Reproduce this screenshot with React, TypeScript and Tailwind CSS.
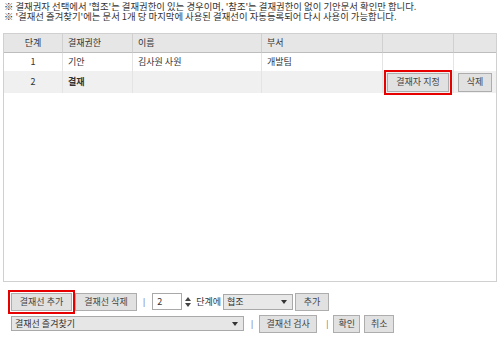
import React from "react";

const font = { fontFamily: '"Noto Sans CJK KR", "Noto Sans", sans-serif' };

function Btn({ children, className = "" }: { children: React.ReactNode; className?: string }) {
  return (
    <div
      className={`flex items-center justify-center border border-[#adadad] bg-[#e1e1e1] text-[9px] text-[#444] h-[18px] ${className}`}
    >
      {children}
    </div>
  );
}

export default function App() {
  return (
    <div className="w-[500px] h-[338px] bg-white text-[#333] overflow-hidden" style={font}>
      <div className="pl-[4px] pt-[1px] text-[9.4px] leading-[10px] text-[#333]">
        <div>※ 결재권자 선택에서 '협조'는 결재권한이 있는 경우이며, '참조'는 결재권한이 없이 기안문서 확인만 합니다.</div>
        <div>※ '결재선 즐겨찾기'에는 문서 1개 당 마지막에 사용된 결재선이 자동등록되어 다시 사용이 가능합니다.</div>
      </div>

      <div className="mt-[12px] ml-[3px] w-[494px] h-[249px] border border-[#d0d0d0]">
        <div className="grid grid-cols-[59px_70px_129px_121px_71px_1fr] text-[9px]">
          <div className="h-[19px] bg-[#e6e6e6] border-b border-[#bdbdbd] border-r border-r-[#d0d0d0] flex items-center justify-center">단계</div>
          <div className="h-[19px] bg-[#e6e6e6] border-b border-[#bdbdbd] border-r border-r-[#d0d0d0] flex items-center pl-[5px]">결재권한</div>
          <div className="h-[19px] bg-[#e6e6e6] border-b border-[#bdbdbd] border-r border-r-[#d0d0d0] flex items-center pl-[5px]">이름</div>
          <div className="h-[19px] bg-[#e6e6e6] border-b border-[#bdbdbd] border-r border-r-[#d0d0d0] flex items-center pl-[5px]">부서</div>
          <div className="h-[19px] bg-[#e6e6e6] border-b border-[#bdbdbd] border-r border-r-[#d0d0d0]"></div>
          <div className="h-[19px] bg-[#e6e6e6] border-b border-[#bdbdbd]"></div>

          <div className="h-[18px] border-r border-[#e4e4e4] flex items-center justify-center">1</div>
          <div className="h-[18px] border-r border-[#e4e4e4] flex items-center pl-[5px]">기안</div>
          <div className="h-[18px] border-r border-[#e4e4e4] flex items-center pl-[5px]">김사원 사원</div>
          <div className="h-[18px] border-r border-[#e4e4e4] flex items-center pl-[5px]">개발팀</div>
          <div className="h-[18px] border-r border-[#e4e4e4]"></div>
          <div className="h-[18px]"></div>

          <div className="h-[22px] bg-[#f0f0f0] border-r border-[#e4e4e4] flex items-center justify-center">2</div>
          <div className="h-[22px] bg-[#f0f0f0] border-r border-[#e4e4e4] flex items-center pl-[5px] font-bold">결재</div>
          <div className="h-[22px] bg-[#f0f0f0] border-r border-[#e4e4e4]"></div>
          <div className="h-[22px] bg-[#f0f0f0] border-r border-[#e4e4e4]"></div>
          <div className="h-[22px] bg-[#f0f0f0] border-r border-[#e4e4e4] flex items-center pl-[4px]">
            <Btn className="w-[62px] h-[19px] outline-2 outline-solid outline-[#e60000] outline-offset-[1px]">결재자 지정</Btn>
          </div>
          <div className="h-[22px] bg-[#f0f0f0] flex items-center pl-[4px]">
            <Btn className="w-[34px] h-[19px]">삭제</Btn>
          </div>
        </div>
      </div>

      <div className="mt-[11px] ml-[11px] flex items-center h-[17px] text-[9px]">
        <Btn className="w-[61px] h-[17px] outline-2 outline-solid outline-[#e60000] outline-offset-[1px]">결재선 추가</Btn>
        <Btn className="w-[62px] h-[17px] ml-[3px]">결재선 삭제</Btn>
        <span className="ml-[6px] text-[8px] text-[#555]">|</span>
        <div className="ml-[7px] w-[30px] h-[17px] border border-[#a9a9a9] bg-white flex items-center pl-[4px]">2</div>
        <svg className="ml-[3px]" width="6" height="12" viewBox="0 0 6 12">
          <path d="M0 5 L3 1 L6 5 Z" fill="#444" />
          <path d="M0 7 L3 11 L6 7 Z" fill="#444" />
        </svg>
        <span className="ml-[5px]">단계에</span>
        <div className="ml-[2px] w-[70px] h-[16px] border border-[#a9a9a9] bg-[#e8e8e8] flex items-center justify-between pl-[3px] pr-[5px]">
          <span>협조</span>
          <svg width="6" height="4" viewBox="0 0 6 4"><path d="M0 0 L6 0 L3 4 Z" fill="#333" /></svg>
        </div>
        <Btn className="w-[34px] h-[17px] ml-[2px]">추가</Btn>
      </div>

      <div className="mt-[5px] ml-[11px] flex items-center h-[17px] text-[9px]">
        <div className="w-[233px] h-[15px] border border-[#a9a9a9] bg-[#e6e6e6] flex items-center justify-between pl-[3px] pr-[5px]">
          <span>결재선 즐겨찾기</span>
          <svg width="6" height="4" viewBox="0 0 6 4"><path d="M0 0 L6 0 L3 4 Z" fill="#333" /></svg>
        </div>
        <span className="ml-[7px] text-[8px] text-[#555]">|</span>
        <Btn className="w-[58px] h-[17px] ml-[6px]">결재선 검사</Btn>
        <span className="ml-[9px] text-[8px] text-[#555]">|</span>
        <Btn className="w-[27px] h-[17px] ml-[5px]">확인</Btn>
        <Btn className="w-[30px] h-[17px] ml-[4px]">취소</Btn>
      </div>
    </div>
  );
}
